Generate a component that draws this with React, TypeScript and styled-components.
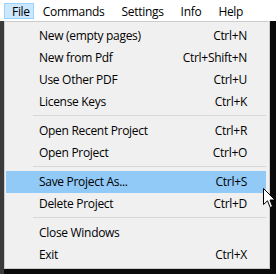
import React from 'react';
import styled, { createGlobalStyle } from 'styled-components';

const GlobalStyle = createGlobalStyle`
  html, body {
    margin: 0;
    padding: 0;
    background: #2e2e2e;
  }
  body {
    width: 276px;
    height: 274px;
    overflow: hidden;
    font-family: "Open Sans", "Noto Sans", sans-serif;
    font-size: 12px;
    letter-spacing: -0.3px;
    color: #000;
  }
`;

const Screen = styled.div`
  position: relative;
  width: 276px;
  height: 274px;
  display: flex;
  flex-direction: column;
`;

const MenuBar = styled.div`
  height: 21px;
  background: #fff;
  display: flex;
  align-items: flex-start;
  padding-left: 4px;
  box-sizing: border-box;
`;

const MenuTitle = styled.div<{ $open?: boolean }>`
  margin-top: 3px;
  height: 16px;
  line-height: 15px;
  padding: ${(p) => (p.$open ? '0 3px 0 7px' : '0 7px 0 8px')};
  border: 1px solid ${(p) => (p.$open ? '#99d1ff' : 'transparent')};
  background: ${(p) => (p.$open ? '#cce8ff' : 'transparent')};
  box-sizing: border-box;
  white-space: nowrap;
`;

const Workspace = styled.div`
  flex: 1;
  display: flex;
  background: linear-gradient(to right, #3a3a3a 0 4px, #0a0a0a 4px);
`;

const Dropdown = styled.div`
  margin-left: 4px;
  width: 266px;
  height: 248px;
  box-sizing: border-box;
  background: #f0f0f0;
  border: 1px solid #cccccc;
  padding: 3px 2px 2px 0;
  display: flex;
  flex-direction: column;
`;

const Item = styled.div<{ $active?: boolean }>`
  height: 22px;
  margin: 0 1px;
  padding: 0 19px 0 33px;
  display: flex;
  align-items: center;
  justify-content: space-between;
  background: ${(p) => (p.$active ? '#91c9f7' : 'transparent')};
  white-space: nowrap;
  line-height: 22px;
`;

const Shortcut = styled.span`
  text-align: right;
`;

const Separator = styled.div`
  height: 7px;
  display: flex;
  align-items: center;
  margin-left: 28px;
  margin-right: 1px;
  &::after {
    content: '';
    flex: 1;
    height: 1px;
    margin-top: -2px;
    background: #d7d7d7;
  }
`;

const Cursor = styled.svg`
  position: absolute;
  left: 263px;
  top: 188px;
`;

type Entry = { label: string; key?: string; active?: boolean } | 'sep';

const entries: Entry[] = [
  { label: 'New (empty pages)', key: 'Ctrl+N' },
  { label: 'New from Pdf', key: 'Ctrl+Shift+N' },
  { label: 'Use Other PDF', key: 'Ctrl+U' },
  { label: 'License Keys', key: 'Ctrl+K' },
  'sep',
  { label: 'Open Recent Project', key: 'Ctrl+R' },
  { label: 'Open Project', key: 'Ctrl+O' },
  'sep',
  { label: 'Save Project As...', key: 'Ctrl+S', active: true },
  { label: 'Delete Project', key: 'Ctrl+D' },
  'sep',
  { label: 'Close Windows' },
  { label: 'Exit', key: 'Ctrl+X' },
];

const App = () => (
  <Screen>
    <GlobalStyle />
    <MenuBar>
      <MenuTitle $open>File</MenuTitle>
      <MenuTitle>Commands</MenuTitle>
      <MenuTitle>Settings</MenuTitle>
      <MenuTitle>Info</MenuTitle>
      <MenuTitle>Help</MenuTitle>
    </MenuBar>
    <Workspace>
      <Dropdown>
        {entries.map((e, i) =>
          e === 'sep' ? (
            <Separator key={i} />
          ) : (
            <Item key={i} $active={e.active}>
              <span>{e.label}</span>
              {e.key && <Shortcut>{e.key}</Shortcut>}
            </Item>
          )
        )}
      </Dropdown>
    </Workspace>
    <Cursor width="13" height="21" viewBox="0 0 13 21">
      <path
        d="M0.5 0.5 L0.5 16.5 L4.5 12.8 L7.2 19.5 L9.6 18.5 L7 12 L12 12 Z"
        fill="#fff"
        stroke="#000"
        strokeWidth="1"
        strokeLinejoin="miter"
      />
    </Cursor>
  </Screen>
);

export default App;
